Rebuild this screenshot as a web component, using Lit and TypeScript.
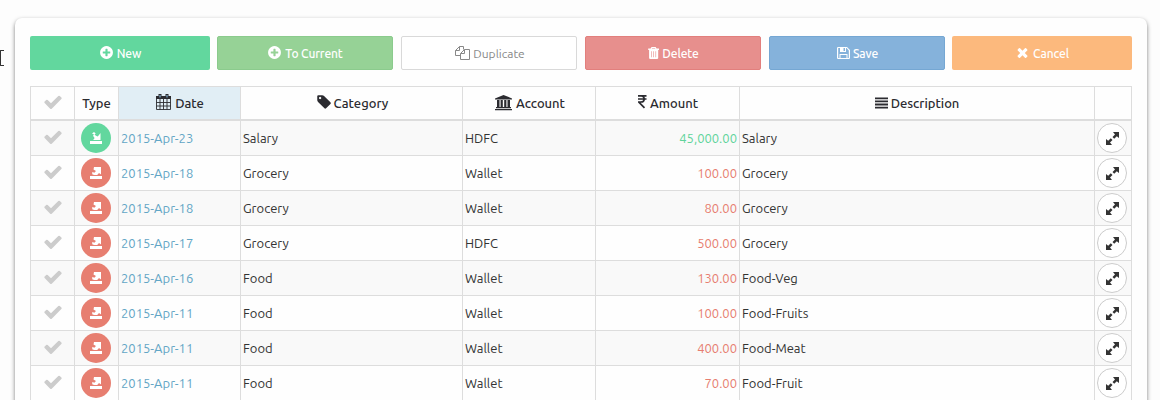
import { LitElement, html, svg, css } from "lit";
import { customElement } from "lit/decorators.js";

const shapes: Record<string, any> = {
  check: svg`<path d="M1671 566q0 40-28 68l-724 724-136 136q-28 28-68 28t-68-28l-136-136-362-362q-28-28-28-68t28-68l136-136q28-28 68-28t68 28l294 295 656-657q28-28 68-28t68 28l136 136q28 28 28 68z"/>`,
  plus: svg`<path d="M1344 960v-128q0-26-19-45t-45-19h-256v-256q0-26-19-45t-45-19h-128q-26 0-45 19t-19 45v256h-256q-26 0-45 19t-19 45v128q0 26 19 45t45 19h256v256q0 26 19 45t45 19h128q26 0 45-19t19-45v-256h256q26 0 45-19t19-45zm320-64q0 209-103 385.500t-279.500 279.500-385.500 103-385.500-103-279.500-279.500-103-385.500 103-385.500 279.500-279.500 385.500-103 385.500 103 279.500 279.500 103 385.500z"/>`,
  times: svg`<path d="M1490 1322q0 40-28 68l-136 136q-28 28-68 28t-68-28l-294-294-294 294q-28 28-68 28t-68-28l-136-136q-28-28-28-68t28-68l294-294-294-294q-28-28-28-68t28-68l136-136q28-28 68-28t68 28l294 294 294-294q28-28 68-28t68 28l136 136q28 28 28 68t-28 68l-294 294 294 294q28 28 28 68z"/>`,
  tag: svg`<path d="M576 448q0-53-37.500-90.500t-90.500-37.500-90.500 37.500-37.500 90.500 37.500 90.500 90.500 37.500 90.500-37.500 37.500-90.500zm1067 576q0 53-37 90l-491 492q-39 37-91 37-53 0-90-37l-715-716q-38-37-64.500-101t-26.500-117v-416q0-52 38-90t90-38h416q53 0 117 26.500t102 64.500l715 714q37 39 37 91z"/>`,
  copy: svg`<path fill="none" stroke="currentColor" d="M5.500 9.500h-5v-5l4-4h4v3M4.500.5v4h-4M5.500 7.500v6h9v-10h-5zM9.500 3.500v4h-4"/>`,
  trash: svg`<path fill-rule="evenodd" d="M3.600 0h4l1 1.500H11v1.500h-.8v8.200l-.8.8H1.900l-.8-.8V3H.2V1.500h2.400zM4.200 1l-.4.600h3.600l-.4-.6zM3.200 4.200v6h.6v-6zM5.300 4.200v6h.6v-6zM7.500 4.200v6h.6v-6z"/>`,
  save: svg`<path fill-rule="evenodd" d="M.8 0H10l3 3v8.200l-.8.800H.8L0 11.200V.8zM1.200 1v10h1.300V7h8v4h1.300V3.500L9.500 1H9v4H3V1zM6.500 1v3H8V1zM3.500 8v3h6V8z"/>`,
  calendar: svg`<path d="M0 2h15v3H0zM2.500 0h3v3h-3zM9.500 0h3v3h-3z"/><path fill="none" stroke="currentColor" stroke-width=".9" d="M.5 4v11.500h14V4M4 5v10.500M7.500 5v10.500M11 5v10.500M.5 8.500h14M.5 12h14"/><path fill="#8fc4e6" d="M3.500 1h1v2.500h-1zM10.500 1h1v2.500h-1z"/>`,
  bank: svg`<path d="M8.500 0L17 3.400V4.500H0V3.400zM2 5h2.500v7H2zM5.600 5h2.200v7H5.600zM9.200 5h2.200v7H9.200zM12.500 5H15v7h-2.500zM1 12h15v1.200H1zM0 14h17v1.300H0z"/>`,
  rupee: svg`<path fill="none" stroke="currentColor" stroke-width="1.700" d="M0 .9h8.500M0 4h8.500M1 .9h2.200C7.200.9 7.200 7 3 7H.8L6.500 12.800"/>`,
  bars: svg`<path d="M0 0h14v2H0zM0 3.300h14v2H0zM0 6.600h14v2H0zM0 10h14v2H0z"/>`,
  out: svg`<path d="M0 9h12v3H0zM4 0h7v7.500L9 6 7.200 8H4.500L2.500 7.500 2 5.500l1.200-.6L4 6l2-2-2.500-1.500z"/>`,
  in: svg`<path d="M0 9h12v3H0zM2 1.500L4 0l1.700 1.600L4.500 2.800 6.500 4l1.300.5L10.500 1V8H3.200l1.400-2L3 3.800 4 2.500z"/>`,
  expand: svg`<path d="M7 0h6v6l-2.200-1.800-2.600 2.600-1.700-1.700 2.500-2.600zM0 7l2.200 1.800 2.600-2.600 1.700 1.700-2.500 2.600L6 13H0z"/>`,
};

const icon = (name: string, w: number, h: number, box = `0 0 ${w} ${h}`) =>
  html`<svg class="i ${name}" width=${w} height=${h} viewBox=${box} fill="currentColor">${shapes[name]}</svg>`;
const FA = "0 0 1792 1792";
const tick = () => icon("check", 20, 20, FA);

const rows = [
  ["in", "2015-Apr-23", "Salary", "HDFC", "45,000.00", "Salary"],
  ["out", "2015-Apr-18", "Grocery", "Wallet", "100.00", "Grocery"],
  ["out", "2015-Apr-18", "Grocery", "Wallet", "80.00", "Grocery"],
  ["out", "2015-Apr-17", "Grocery", "HDFC", "500.00", "Grocery"],
  ["out", "2015-Apr-16", "Food", "Wallet", "130.00", "Food-Veg"],
  ["out", "2015-Apr-11", "Food", "Wallet", "100.00", "Food-Fruits"],
  ["out", "2015-Apr-11", "Food", "Wallet", "400.00", "Food-Meat"],
  ["out", "2015-Apr-11", "Food", "Wallet", "70.00", "Food-Fruit"],
];

@customElement("app-root")
export class AppRoot extends LitElement {
  static styles = css`
    :host { display: block; height: 400px; overflow: hidden; position: relative; background: #fdfdfd;
      font: 13px/20px "Ubuntu", "Noto Sans", sans-serif; color: #333; box-sizing: border-box; padding: 18px 13px 0 15px; }
    * { box-sizing: border-box; }
    svg { display: block; flex: none; }
    .cursor { position: absolute; left: 0; top: 50px; width: 4px; height: 16px; border: 1px solid #333; border-left-width: 1.5px; border-right: 0; border-radius: 1px 0 0 1px; }
    .panel { height: 420px; background: #fefefe; border-radius: 7px; box-shadow: 0 2px 4px rgba(0,0,0,.5); padding: 18px 15px 0; }
    .buttons { display: flex; gap: 8px; height: 34px; }
    .b { width: 176px; display: flex; align-items: center; justify-content: center; gap: 3px; border-radius: 2px; font-size: 12px; letter-spacing: -.1px; color: #fff; border: 1px solid transparent; }
    .b span { padding-top: 2px; }
    .b svg { margin-top: -1px; }
    .new { width: 180px; margin-right: -1px; background: #62d79e; font-weight: 500; }
    .cur { background: #96d296; border-color: #8bcb8d; font-weight: 500; }
    .dup { background: #fff; border-color: #d9d9d9; color: #888; padding-left: 2px; letter-spacing: 0; }
    .del { background: #e78f8d; border-color: #e27f7d; font-weight: 500; padding-left: 1px; }
    .sav { background: #85b2db; border-color: #75a7d3; font-weight: 500; padding-left: 1px; }
    .can { width: 180px; margin-left: -1px; background: #fcb97d; font-weight: 500; }
    .table { margin-top: 16px; border: 1px solid #ddd; border-right: 0; width: 1102px; }
    .row { display: grid; grid-template-columns: 44px 44px 122px 222px 133px 144px 355px 37px; height: 35px; }
    .row > div { display: flex; align-items: center; border-right: 1px solid #ddd; border-bottom: 1px solid #ddd; padding: 0 2px; white-space: nowrap; }
    .row:nth-child(even) { background: #f9f9f9; }
    .row > .c { justify-content: center; padding: 0; }
    .row > .t { padding-left: 6px; }
    .row.head { height: 34px; font-weight: 500; color: #2b2b30; }
    .row.head > div { border-bottom-width: 2px; justify-content: center; gap: 4px; }
    .row.head > .on { background: #e1eef5; padding-left: 3px; }
    .row.head > .acc { padding-left: 4px; }
    .row.head > .des { gap: 3px; }
    .row.head > .cat { gap: 3px; padding-left: 4px; }
    .row.head > .amount { gap: 3px; padding-left: 3px; }
    .calendar, .tag, .rupee { margin-top: -2px; }
    .check { color: #ccc; margin-top: -2px; }
    .row .date { color: #62a5c5; }
    .row .amt { justify-content: flex-end; color: #e77e70; }
    .row .amt.in { color: #5fd49b; }
    .dot { width: 30px; height: 30px; border-radius: 50%; display: flex; align-items: center; justify-content: center; color: #fff; background: #e77e70; }
    .dot.in { background: #62d79e; }
    .dot.more { background: #fff; border: 1px solid #ccc; color: #333; padding-left: 1px; }
  `;

  render() {
    return html`
      <div class="cursor"></div>
      <div class="panel">
        <div class="buttons">
          <div class="b new">${icon("plus", 15, 15, FA)}<span>New</span></div>
          <div class="b cur">${icon("plus", 15, 15, FA)}<span>To Current</span></div>
          <div class="b dup">${icon("copy", 15, 14)}<span>Duplicate</span></div>
          <div class="b del">${icon("trash", 11, 12)}<span>Delete</span></div>
          <div class="b sav">${icon("save", 13, 12)}<span>Save</span></div>
          <div class="b can">${icon("times", 15, 15, FA)}<span>Cancel</span></div>
        </div>
        <div class="table">
          <div class="row head">
            <div>${tick()}</div>
            <div><span>Type</span></div>
            <div class="on">${icon("calendar", 15, 16)}<span>Date</span></div>
            <div class="cat">${icon("tag", 14, 16, "100 0 1568 1792")}<span>Category</span></div>
            <div class="acc">${icon("bank", 17, 16)}<span>Account</span></div>
            <div class="amount">${icon("rupee", 9, 14)}<span>Amount</span></div>
            <div class="des">${icon("bars", 13, 12, "0 0 14 12")}<span>Description</span></div>
            <div></div>
          </div>
          ${rows.map(([kind, date, cat, acc, amt, desc]) => html`
            <div class="row">
              <div class="c">${tick()}</div>
              <div class="t"><span class="dot ${kind}">${icon(kind, 12, 12)}</span></div>
              <div class="date"><span>${date}</span></div>
              <div><span>${cat}</span></div>
              <div><span>${acc}</span></div>
              <div class="amt ${kind}"><span>${amt}</span></div>
              <div><span>${desc}</span></div>
              <div><span class="dot more">${icon("expand", 13, 13)}</span></div>
            </div>`)}
        </div>
      </div>`;
  }
}
